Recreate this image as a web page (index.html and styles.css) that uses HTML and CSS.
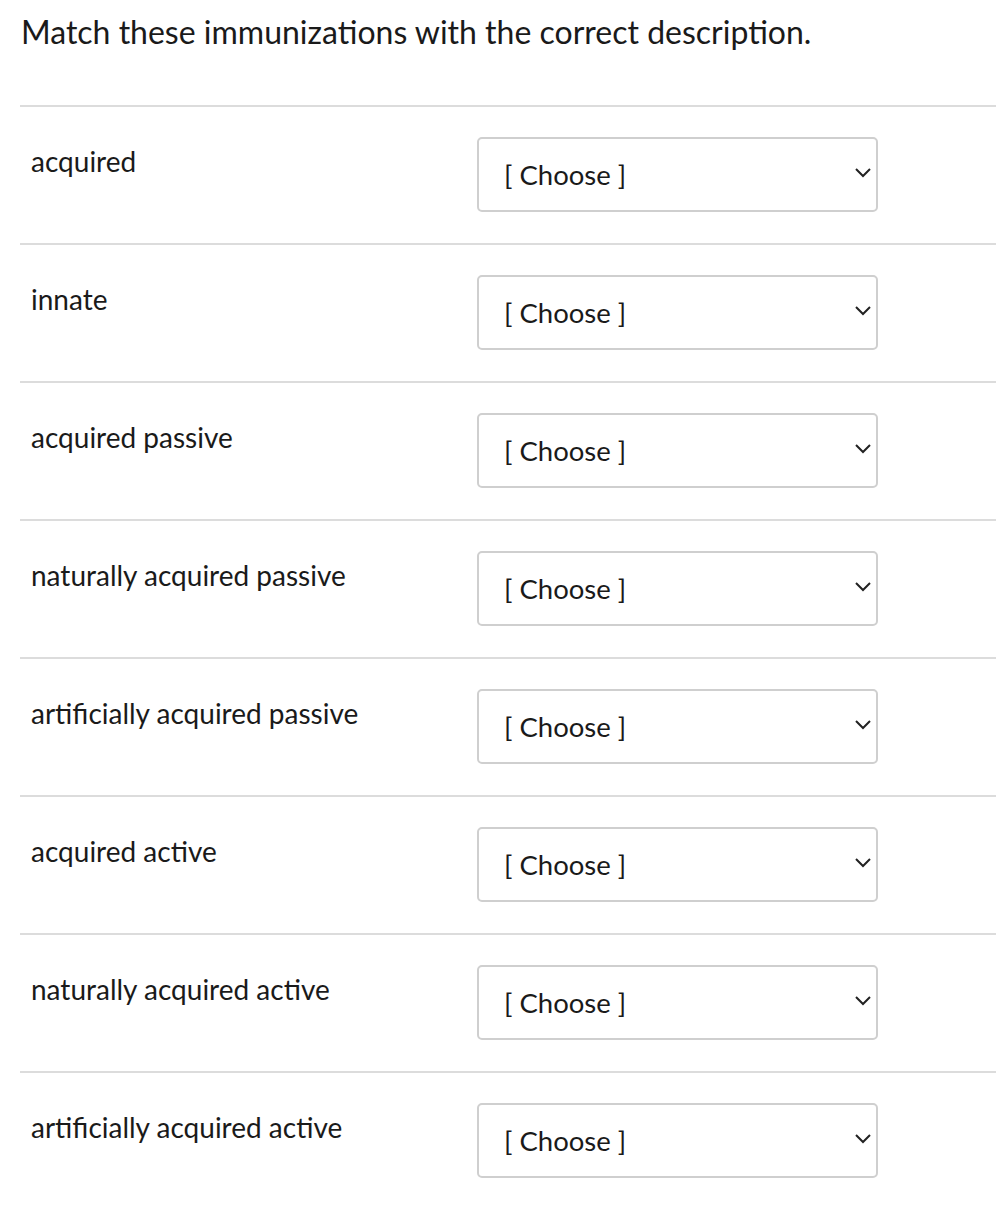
FILE: index.html
```html
<!DOCTYPE html>
<html lang="en">
<head>
<meta charset="utf-8">
<title>Match immunizations</title>
<link rel="stylesheet" href="styles.css">
</head>
<body>
<div class="quiz">
  <h1 class="question">Match these immunizations with the correct description.</h1>
  <div class="answers">
    <div class="row"><div class="label">acquired</div><div class="select"><span class="value">[ Choose ]</span><svg class="chev" width="16" height="10" viewBox="0 0 16 10"><polyline points="1,1 8,8 15,1" fill="none" stroke="#222" stroke-width="2"/></svg></div></div>
    <div class="row"><div class="label">innate</div><div class="select"><span class="value">[ Choose ]</span><svg class="chev" width="16" height="10" viewBox="0 0 16 10"><polyline points="1,1 8,8 15,1" fill="none" stroke="#222" stroke-width="2"/></svg></div></div>
    <div class="row"><div class="label">acquired passive</div><div class="select"><span class="value">[ Choose ]</span><svg class="chev" width="16" height="10" viewBox="0 0 16 10"><polyline points="1,1 8,8 15,1" fill="none" stroke="#222" stroke-width="2"/></svg></div></div>
    <div class="row"><div class="label">naturally acquired passive</div><div class="select"><span class="value">[ Choose ]</span><svg class="chev" width="16" height="10" viewBox="0 0 16 10"><polyline points="1,1 8,8 15,1" fill="none" stroke="#222" stroke-width="2"/></svg></div></div>
    <div class="row"><div class="label">artificially acquired passive</div><div class="select"><span class="value">[ Choose ]</span><svg class="chev" width="16" height="10" viewBox="0 0 16 10"><polyline points="1,1 8,8 15,1" fill="none" stroke="#222" stroke-width="2"/></svg></div></div>
    <div class="row"><div class="label">acquired active</div><div class="select"><span class="value">[ Choose ]</span><svg class="chev" width="16" height="10" viewBox="0 0 16 10"><polyline points="1,1 8,8 15,1" fill="none" stroke="#222" stroke-width="2"/></svg></div></div>
    <div class="row"><div class="label">naturally acquired active</div><div class="select"><span class="value">[ Choose ]</span><svg class="chev" width="16" height="10" viewBox="0 0 16 10"><polyline points="1,1 8,8 15,1" fill="none" stroke="#222" stroke-width="2"/></svg></div></div>
    <div class="row"><div class="label">artificially acquired active</div><div class="select"><span class="value">[ Choose ]</span><svg class="chev" width="16" height="10" viewBox="0 0 16 10"><polyline points="1,1 8,8 15,1" fill="none" stroke="#222" stroke-width="2"/></svg></div></div>
  </div>
</div>
</body>
</html>
```
FILE: styles.css
```css
html, body {
  margin: 0;
  padding: 0;
  background: #fff;
}
body {
  font-family: Lato, "Open Sans", sans-serif;
  color: #1a1a1a;
}
.quiz {
  padding: 0 0 0 20px;
}
.question {
  margin: 0;
  padding: 13px 0 0 1px;
  font-size: 32px;
  font-weight: 400;
  line-height: 1.2;
  height: 105px;
  box-sizing: border-box;
}
.row {
  display: grid;
  grid-template-columns: 457px 401px;
  border-top: 2px solid #dcdcdc;
  padding: 30px 0 31px;
}
.label {
  padding: 8px 0 0 11px;
  font-size: 28px;
  line-height: 1.2;
}
.select {
  height: 75px;
  box-sizing: border-box;
  border: 2px solid #cfcfcf;
  border-radius: 5px;
  display: flex;
  align-items: center;
  justify-content: space-between;
  padding: 0 5px 0 25px;
}
.value {
  font-size: 27.5px;
  line-height: 1;
}
.chev {
  display: block;
  margin-top: -3px;
}
```
